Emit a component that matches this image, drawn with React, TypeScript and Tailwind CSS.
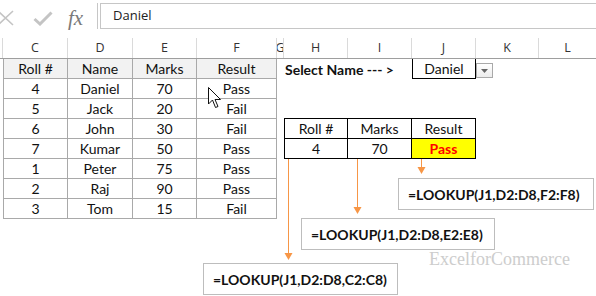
import React from 'react'

const cols = ['', 'C', 'D', 'E', 'F', 'G', 'H', 'I', 'J', 'K', 'L']

const rows = [
  ['4', 'Daniel', '70', 'Pass'],
  ['5', 'Jack', '20', 'Fail'],
  ['6', 'John', '30', 'Fail'],
  ['7', 'Kumar', '50', 'Pass'],
  ['1', 'Peter', '75', 'Pass'],
  ['2', 'Raj', '90', 'Pass'],
  ['3', 'Tom', '15', 'Fail'],
]

const grid = 'grid grid-cols-[3px_65px_65px_64px_80px_7px_64px_64px_64px_63px_1fr]'

function Cell({ children, className = '' }: { children?: React.ReactNode; className?: string }) {
  return <div className={`h-5 flex items-center justify-center whitespace-nowrap ${className}`}>{children}</div>
}

export default function App() {
  return (
    <div className="w-[596px] h-[296px] bg-white relative overflow-hidden text-[#111] font-['Lato',sans-serif]">
      {/* formula bar */}
      <div className="flex pt-[3px] h-[29px]">
        <div className="w-[98px] h-[26px] border-r border-[#c6c6c6] flex items-center relative">
          <svg className="absolute left-[-3px] top-[7px]" width="17" height="16" viewBox="0 0 17 16">
            <path d="M1 1 L16 15 M16 1 L1 15" stroke="#c4c4c4" strokeWidth="1.6" fill="none" />
          </svg>
          <svg className="absolute left-[33px] top-[8px]" width="20" height="15" viewBox="0 0 20 15">
            <path d="M1.5 8 L7 13 L18.5 1.5" stroke="#c4c4c4" strokeWidth="3" fill="none" />
          </svg>
          <span className="absolute left-[68px] top-[0px] text-[21px] italic text-[#7a7a7a] font-['Liberation_Serif',serif]">fx</span>
        </div>
        <div className="ml-[2px] flex-1 h-[26px] border-y border-l border-[#c6c6c6] flex items-center pl-[12px] text-[13px] text-[#222] font-['Open_Sans',sans-serif]">
          Daniel
        </div>
      </div>

      {/* column headers */}
      <div className={`${grid} mt-[9px] h-[21px] border-b border-[#9e9e9e] text-[12.5px] text-[#333] font-['Open_Sans',sans-serif]`}>
        {cols.map((c, i) => (
          <div key={i} className={`flex items-center justify-center overflow-hidden ${i < 10 ? 'border-r border-[#dadada]' : ''}`}>
            {c}
          </div>
        ))}
      </div>

      {/* sheet */}
      <div className={`${grid} text-[14px]`}>
        {/* row 1 */}
        <Cell />
        {['Roll #', 'Name', 'Marks', 'Result'].map((h, i) => (
          <Cell key={h} className={`bg-[#f2f2f2] border-b border-r border-[#a9a9a9] ${i === 0 ? 'border-l' : ''}`}>
            {h}
          </Cell>
        ))}
        <Cell />
        <Cell className="justify-start pl-[1px] font-bold overflow-visible">Select Name --- &gt;</Cell>
        <Cell />
        <Cell className="border border-t-0 border-black">Daniel</Cell>
        <Cell />
        <Cell />

        {rows.map((r, ri) => (
          <React.Fragment key={ri}>
            <Cell />
            {r.map((v, i) => (
              <Cell key={i} className={`border-b border-r border-[#a9a9a9] ${i === 0 ? 'border-l' : ''}`}>
                {v}
              </Cell>
            ))}
            <Cell />
            {ri === 1 && (
              <>
                <Cell className="border-b border-black" />
                <Cell className="border-b border-black" />
                <Cell className="border-b border-black" />
              </>
            )}
            {ri === 2 && (
              <>
                <Cell className="border-l border-r border-b border-black">Roll #</Cell>
                <Cell className="border-r border-b border-black">Marks</Cell>
                <Cell className="border-r border-b border-black">Result</Cell>
              </>
            )}
            {ri === 3 && (
              <>
                <Cell className="border-l border-r border-b border-black">4</Cell>
                <Cell className="border-r border-b border-black">70</Cell>
                <Cell className="border-b border-r border-black bg-[#ffff00] text-[#ff0000] font-bold">Pass</Cell>
              </>
            )}
            {ri !== 1 && ri !== 2 && ri !== 3 && (
              <>
                <Cell />
                <Cell />
                <Cell />
              </>
            )}
            <Cell />
            <Cell />
          </React.Fragment>
        ))}
      </div>

      {/* dropdown button */}
      <div className="absolute left-[476px] top-[63px] w-[17px] h-[15px] border border-[#a9a9a9] bg-gradient-to-b from-white to-[#ececec] flex items-center justify-center">
        <svg width="7" height="4" viewBox="0 0 7 4">
          <path d="M0 0 H7 L3.5 4 Z" fill="#666" />
        </svg>
      </div>

      {/* mouse pointer */}
      <svg className="absolute left-[208px] top-[87px]" width="14" height="22" viewBox="0 0 14 22">
        <path d="M0.5 0.5 V17 L4.5 13 L7.5 20.5 L10 19.5 L7 12.5 H12.5 Z" fill="white" stroke="#111" strokeWidth="1" strokeLinejoin="round" />
      </svg>

      {/* arrows */}
      <svg className="absolute inset-0 pointer-events-none" width="596" height="296">
        <g stroke="#f79646" strokeWidth="1">
          <line x1="288.5" y1="159" x2="288.5" y2="254" />
          <line x1="357.5" y1="159" x2="357.5" y2="208" />
          <line x1="421.5" y1="159" x2="421.5" y2="168" />
        </g>
        <g fill="#f79646">
          <path d="M284.5 253 H292.5 L288.5 260 Z" />
          <path d="M353.5 207 H361.5 L357.5 214 Z" />
          <path d="M417.5 167 H425.5 L421.5 174 Z" />
        </g>
      </svg>

      {/* formula callouts */}
      <div className="absolute left-[398px] top-[178px] w-[196px] h-[32px] border border-[#bdbdbd] bg-white flex items-center pl-[9px] font-bold text-[14px]">
        =LOOKUP(J1,D2:D8,F2:F8)
      </div>
      <div className="absolute left-[301px] top-[218px] w-[194px] h-[32px] border border-[#bdbdbd] bg-white flex items-center pl-[9px] font-bold text-[14px]">
        =LOOKUP(J1,D2:D8,E2:E8)
      </div>
      <div className="absolute left-[429px] top-[246px] text-[18px] text-[#cdcdcd] font-['Liberation_Serif',serif]">
        ExcelforCommerce
      </div>
      <div className="absolute left-[203px] top-[263px] w-[195px] h-[32px] border border-[#bdbdbd] bg-white flex items-center pl-[9px] font-bold text-[14px]">
        =LOOKUP(J1,D2:D8,C2:C8)
      </div>
    </div>
  )
}
